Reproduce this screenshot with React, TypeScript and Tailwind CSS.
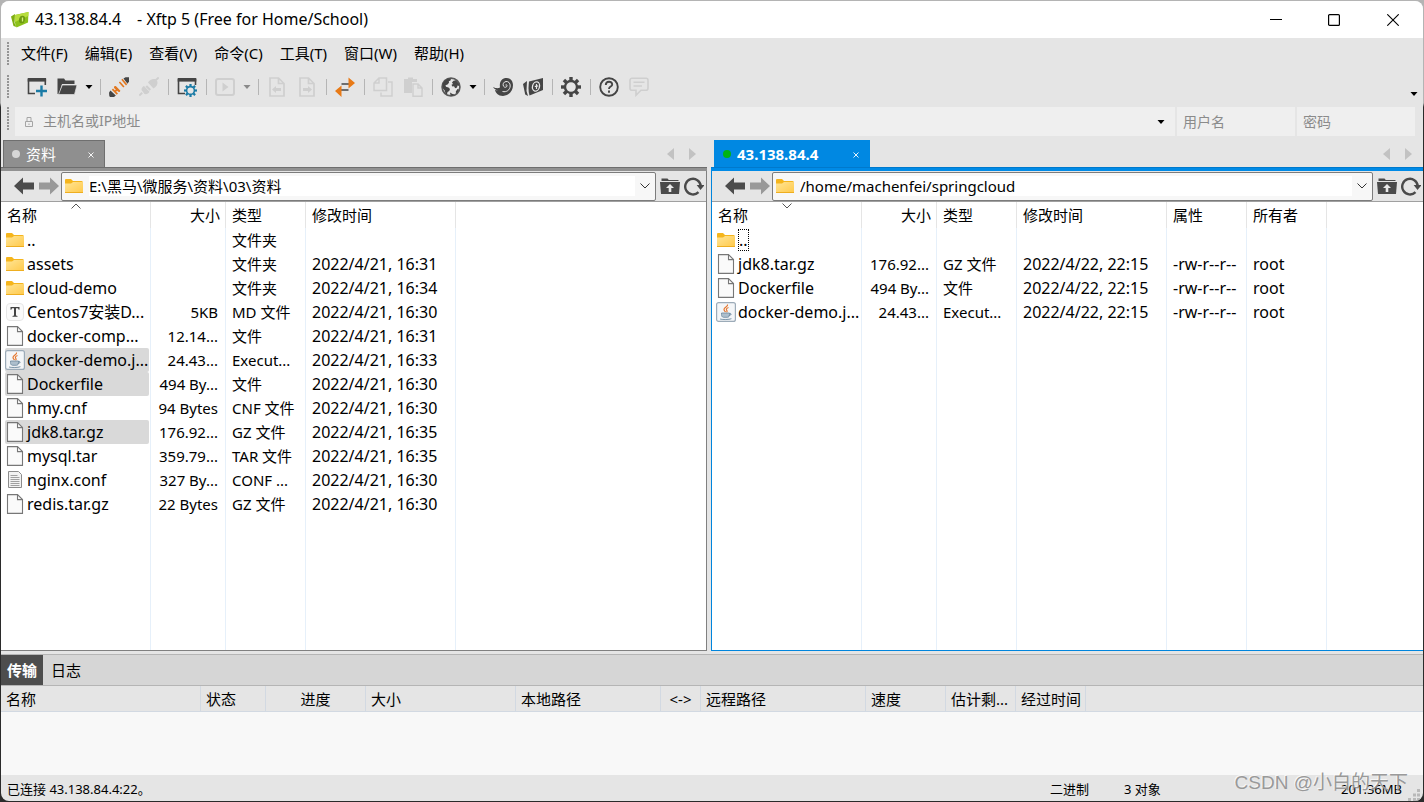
import React from "react";

type IconName =
  | "newWindow" | "open" | "connect" | "disconnect" | "props" | "play" | "pageLeft" | "pageRight"
  | "swap" | "copy" | "paste" | "globe" | "shell" | "xftp" | "gear" | "help" | "comment";

const TOOTH_ANGLES = [0, 45, 90, 135, 180, 225, 270, 315];

function Gear({ cx, cy, r, color, hole }: { cx: number; cy: number; r: number; color: string; hole: string }) {
  return (
    <g>
      {TOOTH_ANGLES.map((a) => (
        <rect
          key={a}
          x={cx - r * 0.17}
          y={cy - r}
          width={r * 0.34}
          height={r * 0.5}
          fill={color}
          transform={`rotate(${a} ${cx} ${cy})`}
        />
      ))}
      <circle cx={cx} cy={cy} r={r * 0.6} fill={hole} stroke={color} strokeWidth={r * 0.24} />
    </g>
  );
}

function ToolIcon({ name }: { name: IconName }) {
  const dark = "#454545";
  const pale = "#cfcfcf";
  const shapes: Record<IconName, React.ReactNode> = {
    newWindow: (
      <>
        <path d="M1.5 2v14.5H8M18.300 2v6" fill="none" stroke={dark} strokeWidth="1.6" />
        <rect x="0.7" y="1" width="18.4" height="3.6" fill={dark} />
        <path d="M14.5 8.500v11M9 14h11" stroke="#1a7ba6" strokeWidth="2.4" />
      </>
    ),
    open: (
      <>
        <path d="M.5 17V1.5h6.500l1.500 2H17.500V7H5L2 17z" fill={dark} />
        <path d="M5.300 8H20l-2.500 9.500H1.500z" fill={dark} stroke="#e5e5e5" strokeWidth=".7" />
      </>
    ),
    connect: (
      <>
        <path d="M14.500 1.500 16.500.3 20 .2v4.300l-1.500 2.200z" fill={dark} />
        <path d="M12.300 2.800 13.500 1.800l4.700 5.400-1.200 1.200z" fill="#e2771f" />
        <path d="M9.800 5.500l1.200-1 4.500 5-1.200 1z" fill="#e2771f" />
        <path d="M0 15.500 1.500 13.500l5.300 5L5 20H1L.3 19z" fill={dark} />
        <path d="M2.800 12.800 4 11.500l5 5-1.300 1.300zM5 11l.2-1.800 1.600-.2 4.600 4.700-.8 1.300-1.400-.2-1-1-1.700 1.400-1.200-1.200 1.500-1.600z" fill="#e2771f" />
      </>
    ),
    disconnect: (
      <>
        <path d="M.3 18.600 3.200 15.700M16.500 3.500 19.700.5" stroke={pale} strokeWidth="2" />
        <path d="M2.500 13c0-2 1-3.500 2.500-4l5.500 5.800c-1 2-3 2.700-5 2.200zM6.500 9.800l1.500-1.500 4 4-1.500 1.500z" fill={pale} />
        <path d="M9 5.500C10.500 3 13 1.500 16 2l2.500 2.700c.3 2.800-1 5-4 6.800z" fill={pale} />
      </>
    ),
    props: (
      <>
        <path d="M1.500 2v14.500H8M18.500 2v6" fill="none" stroke={dark} strokeWidth="1.600" />
        <rect x=".7" y="1" width="18.600" height="3.600" fill={dark} />
        <Gear cx={13.5} cy={13.5} r={6.5} color="#1a7ba6" hole="#e5e5e5" />
      </>
    ),
    play: (
      <>
        <rect x="1" y="2" width="18" height="16" rx="2" fill="none" stroke={pale} strokeWidth="2" />
        <path d="M7.500 5.500 13.500 10l-6 4.500z" fill={pale} />
      </>
    ),
    pageLeft: (
      <>
        <path d="M3 1h8.500L17 6.500V19H3zM11.500 1v5.500H17" fill="none" stroke={pale} strokeWidth="1.700" />
        <path d="M5 12.500 9 9v2h5v3H9v2z" fill={pale} />
      </>
    ),
    pageRight: (
      <>
        <path d="M3 1h8.500L17 6.500V19H3zM11.500 1v5.500H17" fill="none" stroke={pale} strokeWidth="1.700" />
        <path d="M15 12.500 11 9v2H6v3h5v2z" fill={pale} />
      </>
    ),
    swap: (
      <>
        <path d="M6.500 7H14M6 13h7.500" stroke="#6e6e6e" strokeWidth="2" />
        <path d="M13.500.500 20 6 13.500 11.500zM6.500 8.500v11.500L0 14z" fill="#e87a17" />
      </>
    ),
    copy: (
      <>
        <path d="M6 1h7.500v12.500H1V6zM6 1v5H1" fill="none" stroke={pale} strokeWidth="1.500" />
        <path d="M15 5h4v14H8v-3.500" fill="none" stroke={pale} strokeWidth="1.500" />
      </>
    ),
    paste: (
      <>
        <path d="M1 2h4V.5h5V2h4v3H9v11H1z" fill={pale} />
        <path d="M10 7h5l4 4v8.300h-9zM15 7v4h4" fill="#e5e5e5" stroke={pale} strokeWidth="1.500" />
      </>
    ),
    globe: (
      <>
        <circle cx="10" cy="10" r="8.900" fill="#e5e5e5" stroke="#5a5a5a" strokeWidth="1.700" />
        <path d="M1.500 8C2 5 4.500 2.500 7.500 1.500l2.500.2-.5 1.800-1.700.8.2 1.500-1.500 1.700-2 .8.5 1.500 2.500.7 1.500 1.500-.8 2-1.700 1-.5 2.500-1.500-1-.8-3-1.700-2zM11 5.500l1.500-1.800 2.500-.5 3 3.500.5 2.300-2-.5-.5 2-1.800.8-1.200-2-1.700.2-.8-1.800 1.500-.7zM16.500 12l1.500.5-1 2.500-2 1.500-.2-2zM9 15.500l2.500 1.500 2 .5-1.500 1.200-2.500-.5z" fill="#454545" />
      </>
    ),
    shell: (
      <>
        <path d="M0 10c3 1.500 5 1.500 7 .5C6 4.500 9 1 13.500 1 17.500 1 20 4 20 8c0 6-4 10.500-10 11C5 19 2.500 15.500 2 13l3 .5C3 13 1 12 0 10z" fill={dark} />
        <path d="M9.500 14.500c4 1 7.500-1.500 7.700-5.500.2-3-2-4.800-4.200-4.500-2.500.3-3.500 3-2.500 4.700 1 1.700 3.500 1.300 3.500-.5 0-1-1-1.300-1.500-.7" fill="none" stroke="#e5e5e5" strokeWidth="1" />
      </>
    ),
    xftp: (
      <>
        <path d="M0 7l4-3-.5 10 1.500 5-2.800-1.500z" fill={dark} />
        <path d="M6 4.500 20 1v12L6.500 18.500C5 14 5.500 9 6 4.500z" fill={dark} />
        <ellipse cx="13" cy="9.500" rx="3.500" ry="4.700" transform="rotate(15 13 9.500)" fill="none" stroke="#e5e5e5" strokeWidth="1.300" />
        <path d="M13.500 7v5M11.800 9.500l3.500-.7" stroke="#e5e5e5" strokeWidth="1.200" />
      </>
    ),
    gear: <Gear cx={10} cy={10} r={10} color={dark} hole="#e5e5e5" />,
    help: (
      <>
        <circle cx="10" cy="10" r="8.800" fill="none" stroke={dark} strokeWidth="1.900" />
        <path d="M6.800 8c0-4.200 6.400-4.200 6.400-.6 0 2.200-3.200 2.200-3.200 4.600M10 13.600v2.100" fill="none" stroke={dark} strokeWidth="1.900" />
      </>
    ),
    comment: (
      <path d="M3 1.200h14a2 2 0 0 1 2 2v8a2 2 0 0 1-2 2h-5l-5 5v-5H3a2 2 0 0 1-2-2v-8a2 2 0 0 1 2-2zM4.500 5.300h11M4.500 9h8.500" fill="none" stroke={pale} strokeWidth="1.600" />
    ),
  };
  return (
    <svg viewBox="0 0 20 20" className="size-5" aria-hidden="true">
      {shapes[name]}
    </svg>
  );
}

type ToolItem = { kind: "icon"; name: IconName; label: string } | { kind: "caret"; dim?: boolean } | { kind: "sep" };

const icon = (name: IconName, label: string): ToolItem => ({ kind: "icon", name, label });

const tools: ToolItem[] = [
  icon("newWindow", "新建"), icon("open", "打开"), { kind: "caret" }, { kind: "sep" },
  icon("connect", "重新连接"), icon("disconnect", "断开"), { kind: "sep" },
  icon("props", "属性"), { kind: "sep" },
  icon("play", "执行"), { kind: "caret", dim: true }, { kind: "sep" },
  icon("pageLeft", "向左传输"), icon("pageRight", "向右传输"), { kind: "sep" },
  icon("swap", "同步"), { kind: "sep" },
  icon("copy", "复制"), icon("paste", "粘贴"), { kind: "sep" },
  icon("globe", "编码"), { kind: "caret" }, { kind: "sep" },
  icon("shell", "Xshell"), icon("xftp", "Xftp"), { kind: "sep" },
  icon("gear", "选项"), { kind: "sep" },
  icon("help", "帮助"), icon("comment", "反馈"),
];

function Caret({ dim }: { dim?: boolean }) {
  return (
    <svg viewBox="0 0 8 4" className="h-1 w-2" aria-hidden="true">
      <path d="M.5 0h7L4 4z" fill={dim ? "#8a8a8a" : "#000"} />
    </svg>
  );
}

function Grip() {
  return (
    <span className="h-6 w-[2px] shrink-0 bg-[repeating-linear-gradient(to_bottom,#959595_0px,#959595_2px,transparent_2px,transparent_3px)]" />
  );
}

function Folder() {
  return (
    <svg viewBox="0 0 18 14" className="h-[14px] w-[18px] shrink-0" aria-hidden="true">
      <defs>
        <linearGradient id="folderFill" x1="0" y1="0" x2="1" y2="1">
          <stop offset="0" stopColor="#ffe596" />
          <stop offset="1" stopColor="#ffc94a" />
        </linearGradient>
      </defs>
      <path d="M0 1q0-1 1-1h5l2 2h8.500q1.500 0 1.500 1.500V6H0z" fill="#f5b51c" />
      <path d="M0 4.500h6L8 3h10v10.200q0 .8-1 .8H1q-1 0-1-.8z" fill="url(#folderFill)" />
      <path d="M0 13.500h18" stroke="#eeae20" />
    </svg>
  );
}

function FileIcon({ kind }: { kind: Kind }) {
  if (kind === "folder") {
    return <Folder />;
  }
  if (kind === "md") {
    return (
      <svg viewBox="0 0 18 18" className="size-[18px]" aria-hidden="true">
        <rect x=".5" y=".5" width="17" height="17" rx="3.500" fill="#fafafa" stroke="#e6e6e6" />
        <path d="M4.500 4h9v2.800h-.8L12 5.200h-2v7.300l1.500.4v.8h-5v-.8l1.500-.4V5.200H6l-.7 1.600h-.8z" fill="#444" />
      </svg>
    );
  }
  if (kind === "jar") {
    return (
      <svg viewBox="0 0 20 20" className="size-5" aria-hidden="true">
        <rect x=".6" y=".6" width="18.800" height="18.800" rx="2" fill="#f4f6f8" stroke="#9cabb8" strokeWidth="1.200" />
        <path d="M11.500 2.500c1 2-3.500 2.800-3.500 5 0 1.200 1 1.500 1.500 2.500M12.500 5.500c-2.500 1-2.500 2-1.500 3.300.3.700 0 1.200-.5 1.500" fill="none" stroke="#e5762f" strokeWidth="1.200" />
        <path d="M5.500 11h8v1.500c0 2-1 2.800-2 2.800h-4c-1.500 0-2-1.500-2-2.800zM13.500 11.500c2.500-.5 2 2-.8 2.200M4 17c3 .8 8.500.8 11.500-.3" fill="#8fa8ba" fillOpacity=".7" stroke="#6c889d" strokeWidth=".8" />
      </svg>
    );
  }
  if (kind === "text") {
    return (
      <svg viewBox="0 0 18 20" className="h-5 w-[18px]" aria-hidden="true">
        <path d="M2.500 1.500h10l3 3v13h-13z" fill="#f2f2f2" stroke="#8c8c8c" />
        <path d="M4.500 5.500h7M4.500 7.500h9M4.500 9.500h9M4.500 11.500h9M4.500 13.500h9M4.500 15.500h9" stroke="#a0a0a0" />
      </svg>
    );
  }
  return (
    <svg viewBox="0 0 18 20" className="h-5 w-[18px]" aria-hidden="true">
      <path d="M1.500.6h10l5 5v13.800h-15z" fill="#fafafa" stroke="#777" strokeWidth="1.100" />
      <path d="M11.500.6v5h5" fill="none" stroke="#777" strokeWidth="1.100" />
    </svg>
  );
}

type Kind = "folder" | "file" | "md" | "jar" | "text";
type Row = { kind: Kind; cells: string[]; selected?: boolean; focused?: boolean };

const localRows: Row[] = [
  { kind: "folder", cells: ["..", "", "文件夹", ""] },
  { kind: "folder", cells: ["assets", "", "文件夹", "2022/4/21, 16:31"] },
  { kind: "folder", cells: ["cloud-demo", "", "文件夹", "2022/4/21, 16:34"] },
  { kind: "md", cells: ["Centos7安装D...", "5KB", "MD 文件", "2022/4/21, 16:30"] },
  { kind: "file", cells: ["docker-comp...", "12.14...", "文件", "2022/4/21, 16:31"] },
  { kind: "jar", cells: ["docker-demo.j...", "24.43...", "Execut...", "2022/4/21, 16:33"], selected: true },
  { kind: "file", cells: ["Dockerfile", "494 By...", "文件", "2022/4/21, 16:30"], selected: true },
  { kind: "file", cells: ["hmy.cnf", "94 Bytes", "CNF 文件", "2022/4/21, 16:30"] },
  { kind: "file", cells: ["jdk8.tar.gz", "176.92...", "GZ 文件", "2022/4/21, 16:35"], selected: true },
  { kind: "file", cells: ["mysql.tar", "359.79...", "TAR 文件", "2022/4/21, 16:35"] },
  { kind: "text", cells: ["nginx.conf", "327 By...", "CONF ...", "2022/4/21, 16:30"] },
  { kind: "file", cells: ["redis.tar.gz", "22 Bytes", "GZ 文件", "2022/4/21, 16:30"] },
];

const remoteRows: Row[] = [
  { kind: "folder", cells: ["..", "", "", "", "", ""], focused: true },
  { kind: "file", cells: ["jdk8.tar.gz", "176.92...", "GZ 文件", "2022/4/22, 22:15", "-rw-r--r--", "root"] },
  { kind: "file", cells: ["Dockerfile", "494 By...", "文件", "2022/4/22, 22:15", "-rw-r--r--", "root"] },
  { kind: "jar", cells: ["docker-demo.j...", "24.43...", "Execut...", "2022/4/22, 22:15", "-rw-r--r--", "root"] },
];

const COLUMN_WIDTHS = [150, 75, 80, 150, 80, 80];

const CELL_CLASSES = [
  "",
  "pr-[7px] text-right",
  "pl-[6px]",
  "pl-[6px] text-base leading-5",
  "pl-[6px] text-base leading-5",
  "pl-[6px] text-base leading-5",
];

function FileTable({ heads, rows, up }: { heads: string[]; rows: Row[]; up: boolean }) {
  return (
    <table className="h-full w-full table-fixed border-separate border-spacing-0 whitespace-nowrap">
      <colgroup>
        {heads.map((h, i) => (
          <col key={h} style={{ width: COLUMN_WIDTHS[i] }} />
        ))}
        <col />
      </colgroup>
      <thead>
        <tr className="h-[26px]">
          {heads.map((h, i) => (
            <th
              key={h}
              scope="col"
              className={`relative border-r border-[#e5e5e5] p-0 font-normal ${i === 1 ? "pr-[5px] text-right" : "pl-[6px] text-left"}`}
            >
              {h}
              {i === 0 && (
                <svg viewBox="0 0 10 6" className="absolute top-px left-[70px] h-[6px] w-[10px]" aria-hidden="true">
                  <path d={up ? "M.5 5.500 5 1l4.500 4.500" : "M.5.5 5 5 9.500.5"} fill="none" stroke="#555" />
                </svg>
              )}
            </th>
          ))}
          <td />
        </tr>
      </thead>
      <tbody>
        {rows.map((row) => (
          <tr key={row.cells[0]} className="h-6">
            {row.cells.map((cell, i) =>
              i === 0 ? (
                <td key={i} className="border-r border-[#e6f0fa] p-0 pr-px pl-1 text-base leading-5">
                  <div className={`flex h-6 items-center rounded-xs ${row.selected ? "bg-[#d9d9d9]" : ""}`}>
                    <span className="mr-[2px] flex w-5 shrink-0 justify-center">
                      <FileIcon kind={row.kind} />
                    </span>
                    <span className={row.focused ? "flex h-[22px] items-center border border-dotted border-black" : ""}>
                      {cell}
                    </span>
                  </div>
                </td>
              ) : (
                <td key={i} className={`border-r border-[#e6f0fa] p-0 ${CELL_CLASSES[i]}`}>
                  {cell}
                </td>
              ),
            )}
            <td />
          </tr>
        ))}
        <tr>
          {heads.map((h) => (
            <td key={h} className="border-r border-[#e6f0fa]" />
          ))}
          <td />
        </tr>
      </tbody>
    </table>
  );
}

function BigArrow({ forward }: { forward?: boolean }) {
  return (
    <svg viewBox="0 0 20 18" className="h-[18px] w-5" aria-hidden="true">
      <path
        d={forward ? "M20 9 11 .5v5H0v7h11v5z" : "M0 9 9 .5v5h11v7H9v5z"}
        fill={forward ? "#999" : "#4c4c4c"}
      />
    </svg>
  );
}

function PathBar({ path, label }: { path: string; label: string }) {
  return (
    <div className="flex h-[31px] shrink-0 items-center border-b border-[#a0a0a0] bg-[#e5e5e5] pl-[13px] pr-[2px]">
      <button type="button" aria-label="后退" className="mr-[5px]">
        <BigArrow />
      </button>
      <button type="button" aria-label="前进" className="mr-[2px]">
        <BigArrow forward />
      </button>
      <div className="flex h-[29px] min-w-0 flex-1 items-center rounded-[2px] border border-[#7c7c7c] bg-[#f7f7f7] pl-[3px]">
        <Folder />
        <input
          aria-label={label}
          defaultValue={path}
          className="ml-[6px] h-5 min-w-0 flex-1 bg-white outline-none"
        />
        <button type="button" aria-label="历史路径" className="flex h-full w-5 items-center justify-center">
          <svg viewBox="0 0 10 6" className="h-[6px] w-[10px]" aria-hidden="true">
            <path d="M.5.5 5 5 9.500.5" fill="none" stroke="#333" />
          </svg>
        </button>
      </div>
      <button type="button" aria-label="上级目录" className="ml-1">
        <svg viewBox="0 0 20 16" className="h-4 w-5" aria-hidden="true">
          <path d="M1.500 3V.5h6l1.300 1.500h9.700V3z" fill="#4a4a4a" />
          <path d="M0 4h20l-1 12H1z" fill="#4a4a4a" />
          <path d="M10 6l4 4h-2.700v4H8.700v-4H6z" fill="#e9e9e9" />
        </svg>
      </button>
      <button type="button" aria-label="刷新" className="ml-1">
        <svg viewBox="0 0 20 20" className="size-5" aria-hidden="true">
          <path d="M14.500 16.200A7.800 7.800 0 1 1 16.800 10" fill="none" stroke="#4a4a4a" strokeWidth="2.400" />
          <path d="M12.700 9H20.500l-4 5z" fill="#4a4a4a" />
        </svg>
      </button>
    </div>
  );
}

function TabScroll() {
  return (
    <div className="mr-[11px] mb-[7px] ml-auto flex gap-[15px]">
      <button type="button" aria-label="上一个标签">
        <svg viewBox="0 0 7 12" className="h-3 w-[7px]" aria-hidden="true">
          <path d="M7 0v12L0 6z" fill="#c2c2c2" />
        </svg>
      </button>
      <button type="button" aria-label="下一个标签">
        <svg viewBox="0 0 7 12" className="h-3 w-[7px]" aria-hidden="true">
          <path d="M0 0v12l7-6z" fill="#c2c2c2" />
        </svg>
      </button>
    </div>
  );
}

function TabClose() {
  return (
    <button type="button" aria-label="关闭标签" className="ml-auto pt-[2px]">
      <svg viewBox="0 0 6 6" className="size-[6px]" aria-hidden="true">
        <path d="M.5.5l5 5M5.500.5l-5 5" stroke="#fff" strokeWidth=".9" />
      </svg>
    </button>
  );
}

const menus = ["文件(F)", "编辑(E)", "查看(V)", "命令(C)", "工具(T)", "窗口(W)", "帮助(H)"];

const transferColumns = [
  { label: "名称", width: 200 },
  { label: "状态", width: 65 },
  { label: "进度", width: 100 },
  { label: "大小", width: 150 },
  { label: "本地路径", width: 145 },
  { label: "<->", width: 40 },
  { label: "远程路径", width: 165 },
  { label: "速度", width: 80 },
  { label: "估计剩...", width: 70 },
  { label: "经过时间", width: 70 },
];

export default function App() {
  return (
    <div className="relative h-screen min-h-[600px] overflow-hidden bg-[linear-gradient(to_bottom,#b4b4b4_0px,#b4b4b4_103px,#2b2b2b_107px,#2b2b2b_100%)] p-px font-['Noto_Sans','Noto_Sans_CJK_SC',sans-serif] text-[15px] leading-5 text-black">
      <div className="flex h-full flex-col overflow-hidden rounded-lg bg-[#e5e5e5]">
        <header className="flex h-[37px] shrink-0 items-center bg-white pl-[10px]">
          <svg viewBox="0 0 18 16" className="h-4 w-[18px]" aria-hidden="true">
            <path d="M0 4.500 4 2l-.5 9L5.500 15 2.500 14z" fill="#7fae12" />
            <path d="M4 3 17.500 0 17 10.500 5.500 15.500C3.500 12 3.500 7 4 3z" fill="#8cc11a" />
            <path d="M4 3 17.500 0l-.2 4L4 10z" fill="#b7dd3c" />
            <ellipse cx="11" cy="7.500" rx="3" ry="3.800" transform="rotate(15 11 7.500)" fill="#6d9a10" />
            <path d="M11.500 5.500v4" stroke="#d5ee7f" strokeWidth="1.300" />
          </svg>
          <h1 className="ml-[6px] flex gap-4 pb-px text-base leading-5">
            <span>43.138.84.4</span>
            <span>- Xftp 5 (Free for Home/School)</span>
          </h1>
          <div className="ml-auto flex h-full items-center">
            <button type="button" aria-label="最小化" className="flex h-full w-[58px] items-center justify-center">
              <svg viewBox="0 0 12 12" className="size-3" aria-hidden="true">
                <path d="M0 5.500h12" stroke="#000" />
              </svg>
            </button>
            <button type="button" aria-label="最大化" className="flex h-full w-[58px] items-center justify-center">
              <svg viewBox="0 0 12 12" className="size-3" aria-hidden="true">
                <rect x=".6" y=".6" width="10.800" height="10.800" rx="1" fill="none" stroke="#000" strokeWidth="1.200" />
              </svg>
            </button>
            <button type="button" aria-label="关闭" className="flex h-full w-[60px] items-center justify-center">
              <svg viewBox="0 0 12 12" className="size-3" aria-hidden="true">
                <path d="M.3.3l11.400 11.400M11.700.3.3 11.700" stroke="#000" strokeWidth="1.100" />
              </svg>
            </button>
          </div>
        </header>

        <nav className="flex h-8 shrink-0 items-center pl-[6px]">
          <Grip />
          <div className="ml-3 flex gap-[17px] pb-[2px]">
            {menus.map((m) => (
              <button key={m} type="button">
                {m}
              </button>
            ))}
          </div>
        </nav>

        <div className="flex h-[34px] shrink-0 items-center pl-[6px]">
          <Grip />
          <div className="ml-[13px] flex items-center">
            {tools.map((t, i) => {
              if (t.kind === "sep") {
                return (
                  <span key={i} className="flex w-2 justify-center">
                    <span className="h-4 w-px bg-[#b5b5b5]" />
                  </span>
                );
              }
              if (t.kind === "caret") {
                return (
                  <button key={i} type="button" aria-label="更多" className="flex h-5 w-[14px] items-center justify-center">
                    <Caret dim={t.dim} />
                  </button>
                );
              }
              return (
                <button key={i} type="button" aria-label={t.label} className="flex w-[30px] justify-center">
                  <ToolIcon name={t.name} />
                </button>
              );
            })}
          </div>
          <button type="button" aria-label="工具栏选项" className="mr-[5px] mb-2 ml-auto self-end">
            <Caret />
          </button>
        </div>

        <div className="mt-[3px] flex h-[29px] shrink-0 gap-[2px] pr-2 pl-[6px] text-sm">
          <Grip />
          <div className="ml-1 flex min-w-0 flex-1 items-center bg-[#efefef] pr-[10px] pl-[10px]">
            <svg viewBox="0 0 8 10" className="h-[10px] w-2" aria-hidden="true">
              <path d="M.5 4.500h7v5h-7zM2 4.500V.5h4v4M4 6.500v1.500" fill="none" stroke="#a5a5a5" />
            </svg>
            <input
              aria-label="主机名或IP地址"
              placeholder="主机名或IP地址"
              className="ml-[10px] min-w-0 flex-1 bg-transparent pb-px outline-none placeholder:text-[#8b8b8b]"
            />
            <button type="button" aria-label="历史主机">
              <Caret />
            </button>
          </div>
          <input
            aria-label="用户名"
            placeholder="用户名"
            className="w-[118px] bg-[#efefef] px-[6px] outline-none placeholder:text-[#8b8b8b]"
          />
          <input
            aria-label="密码"
            placeholder="密码"
            type="password"
            className="w-[118px] bg-[#efefef] px-[6px] outline-none placeholder:text-[#8b8b8b]"
          />
        </div>

        <main className="grid min-h-0 flex-1 grid-cols-[706fr_712fr] gap-1">
          <section className="flex min-w-0 flex-col">
            <div className="flex h-[31px] shrink-0 items-end pl-[2px]">
              <div className="flex h-[27px] w-[102px] items-center border border-b-0 border-[#6f6f6f] bg-[#8f8f8f] pr-[10px] pl-2 text-white">
                <span className="mr-[6px] size-2 rounded-full bg-[#d6d6d6]" />
                资料
                <TabClose />
              </div>
              <TabScroll />
            </div>
            <div className="h-1 shrink-0 border-t border-[#6e6e6e] bg-[#919191]" />
            <div className="flex min-h-0 flex-1 flex-col border-r border-b border-[#808080] bg-white">
              <PathBar path="E:\黑马\微服务\资料\03\资料" label="本地路径" />
              <div className="min-h-0 flex-1 overflow-hidden">
                <FileTable heads={["名称", "大小", "类型", "修改时间"]} rows={localRows} up />
              </div>
            </div>
          </section>

          <section className="flex min-w-0 flex-col">
            <div className="flex h-[31px] shrink-0 items-end pl-[3px]">
              <div className="flex h-[27px] w-[156px] items-center bg-[#0088e2] pr-[11px] pl-[9px] font-bold text-white">
                <span className="mr-[6px] size-2 rounded-full bg-[#00b315]" />
                43.138.84.4
                <TabClose />
              </div>
              <TabScroll />
            </div>
            <div className="h-1 shrink-0 border-t border-[#0079cc] bg-[#008ae6]" />
            <div className="flex min-h-0 flex-1 flex-col border-b border-l border-[#0085dd] bg-white">
              <PathBar path="/home/machenfei/springcloud" label="远程路径" />
              <div className="min-h-0 flex-1 overflow-hidden">
                <FileTable
                  heads={["名称", "大小", "类型", "修改时间", "属性", "所有者"]}
                  rows={remoteRows}
                  up={false}
                />
              </div>
            </div>
          </section>
        </main>

        <section className="mt-[3px] shrink-0">
          <div className="flex h-8 border-y border-[#b5b5b5] bg-[#d6d6d6]">
            <button type="button" className="bg-[#4d4d4d] px-[6px] font-bold text-white">
              传输
            </button>
            <button type="button" className="px-2">
              日志
            </button>
          </div>
          <table className="w-full table-fixed border-separate border-spacing-0 whitespace-nowrap">
            <colgroup>
              {transferColumns.map((c) => (
                <col key={c.label} style={{ width: c.width }} />
              ))}
              <col />
            </colgroup>
            <thead>
              <tr className="h-[26px]">
                {transferColumns.map((c) => (
                  <th
                    key={c.label}
                    scope="col"
                    className={`border-r border-b border-[#d2d9e2] p-0 font-normal ${c.label === "进度" || c.label === "<->" ? "text-center" : "pl-[5px] text-left"}`}
                  >
                    {c.label}
                  </th>
                ))}
                <td className="border-b border-[#d2d9e2]" />
              </tr>
            </thead>
          </table>
          <div className="h-[63px] bg-[#f8f8f8]" />
        </section>

        <footer className="flex h-[26px] shrink-0 items-center pt-px pl-[6px] text-[13px]">
          <span>已连接 43.138.84.4:22。</span>
          <span className="ml-auto w-[74px]">二进制</span>
          <span className="w-[136px]">3 对象</span>
          <span className="w-[142px] text-right">201.36MB</span>
          <svg viewBox="0 0 12 12" className="mr-[3px] ml-[6px] size-3 self-end" aria-hidden="true">
            <path d="M9 0h3v3H9zM5 4.500h3v3H5zM9 4.500h3v3H9zM0 9h3v3H0zM5 9h3v3H5zM9 9h3v3H9z" fill="#b9b9b9" />
          </svg>
        </footer>
      </div>
      <span className="pointer-events-none absolute right-[16px] bottom-[7px] font-['Liberation_Sans','Noto_Sans_CJK_SC',sans-serif] text-[19px] leading-6 text-[#8e8e8e]/90 [text-shadow:-1px_-1px_0_#ffffffb0]">
        CSDN @小白的天下
      </span>
    </div>
  );
}
